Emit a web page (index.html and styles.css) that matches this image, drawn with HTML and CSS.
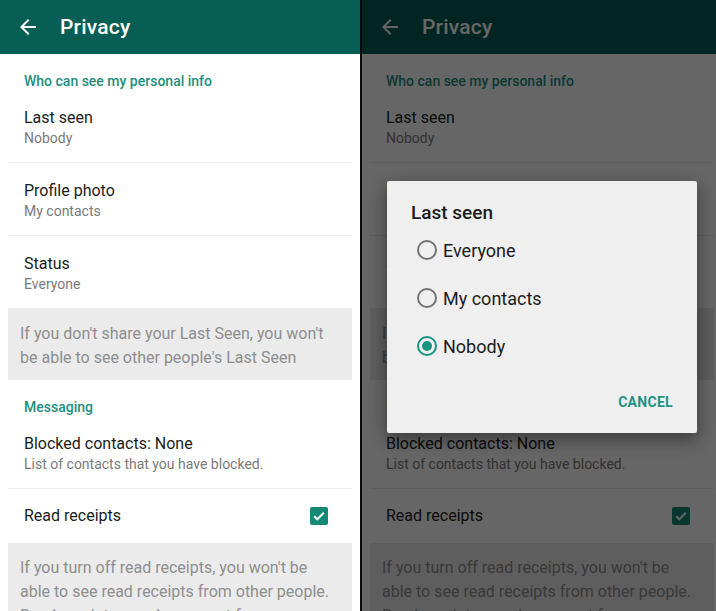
FILE: index.html
```html
<!DOCTYPE html>
<html lang="en">
<head>
    <meta charset="UTF-8">
    <meta name="viewport" content="width=device-width, initial-scale=1.0">
    <title>Privacy</title>
    <link rel="stylesheet" href="styles.css">
</head>
<body>
    <div class="page">
        <!-- Left: settings screen -->
        <div class="shot">
            <div class="screen">
                <header class="appbar">
                    <svg class="back" viewBox="0 0 24 24"><path d="M20 11H7.83l5.59-5.59L12 4l-8 8 8 8 1.41-1.41L7.83 13H20v-2z"/></svg>
                    <h1>Privacy</h1>
                </header>
                <div class="content">
                    <div class="section-title">Who can see my personal info</div>
                    <div class="row">
                        <div class="row-title">Last seen</div>
                        <div class="row-sub">Nobody</div>
                    </div>
                    <div class="row">
                        <div class="row-title">Profile photo</div>
                        <div class="row-sub">My contacts</div>
                    </div>
                    <div class="row">
                        <div class="row-title">Status</div>
                        <div class="row-sub">Everyone</div>
                    </div>
                    <div class="note">If you don't share your Last Seen, you won't be able to see other people's Last Seen</div>
                    <div class="section-title">Messaging</div>
                    <div class="row">
                        <div class="row-title">Blocked contacts: None</div>
                        <div class="row-sub">List of contacts that you have blocked.</div>
                    </div>
                    <div class="row row-check">
                        <div class="row-title">Read receipts</div>
                        <span class="checkbox"><svg viewBox="0 0 18 18"><path d="M4.2 9.2l3.1 3.1 6.5-6.6" /></svg></span>
                    </div>
                    <div class="note">If you turn off read receipts, you won't be able to see read receipts from other people. Read receipts are always sent for group chats.</div>
                </div>
            </div>
        </div>

        <div class="split"></div>

        <!-- Right: same screen with the Last seen dialog open -->
        <div class="shot shot-dialog">
            <div class="screen">
                <header class="appbar">
                    <svg class="back" viewBox="0 0 24 24"><path d="M20 11H7.83l5.59-5.59L12 4l-8 8 8 8 1.41-1.41L7.83 13H20v-2z"/></svg>
                    <h1>Privacy</h1>
                </header>
                <div class="content">
                    <div class="section-title">Who can see my personal info</div>
                    <div class="row">
                        <div class="row-title">Last seen</div>
                        <div class="row-sub">Nobody</div>
                    </div>
                    <div class="row">
                        <div class="row-title">Profile photo</div>
                        <div class="row-sub">My contacts</div>
                    </div>
                    <div class="row">
                        <div class="row-title">Status</div>
                        <div class="row-sub">Everyone</div>
                    </div>
                    <div class="note">If you don't share your Last Seen, you won't be able to see other people's Last Seen</div>
                    <div class="section-title">Messaging</div>
                    <div class="row">
                        <div class="row-title">Blocked contacts: None</div>
                        <div class="row-sub">List of contacts that you have blocked.</div>
                    </div>
                    <div class="row row-check">
                        <div class="row-title">Read receipts</div>
                        <span class="checkbox"><svg viewBox="0 0 18 18"><path d="M4.2 9.2l3.1 3.1 6.5-6.6" /></svg></span>
                    </div>
                    <div class="note">If you turn off read receipts, you won't be able to see read receipts from other people. Read receipts are always sent for group chats.</div>
                </div>
            </div>
            <div class="scrim"></div>
            <div class="dialog">
                <div class="dialog-title">Last seen</div>
                <div class="radio-list">
                    <div class="radio-row"><span class="radio"></span>Everyone</div>
                    <div class="radio-row"><span class="radio"></span>My contacts</div>
                    <div class="radio-row"><span class="radio checked"></span>Nobody</div>
                </div>
                <div class="dialog-actions">
                    <span class="text-btn">CANCEL</span>
                </div>
            </div>
        </div>
    </div>
</body>
</html>
```

FILE: styles.css
```css
body {
    margin: 0;
    padding: 0;
    background-color: #ffffff;
    font-family: Roboto, "Noto Sans", Arial, sans-serif;
    color: #1c1c1c;
    overflow: hidden;
}
.page {
    display: flex;
    width: 716px;
    height: 611px;
    overflow: hidden;
}
.shot {
    width: 360px;
    height: 611px;
    flex-shrink: 0;
    overflow: hidden;
    position: relative;
}
.shot-dialog {
    width: 354px;
}
.split {
    width: 2px;
    flex-shrink: 0;
    background-color: #0a0a0a;
}
.screen {
    width: 360px;
    background-color: #ffffff;
}
.appbar {
    height: 54px;
    background-color: #075e54;
    display: flex;
    align-items: center;
    padding-left: 16px;
    gap: 20px;
}
.back {
    width: 24px;
    height: 24px;
    fill: #ffffff;
}
h1 {
    margin: 0;
    font-size: 21px;
    font-weight: 500;
    color: #ffffff;
    letter-spacing: 0.2px;
}
.content {
    padding: 0 8px;
}
.section-title {
    padding: 18px 16px 0;
    line-height: 18px;
    font-size: 14px;
    font-weight: 500;
    color: #1f8e7e;
}
.row {
    padding: 18px 16px 14px;
    border-bottom: 1px solid #ececec;
}
.row-title {
    font-size: 16px;
    line-height: 20px;
    color: #1c1c1c;
}
.row-sub {
    font-size: 14px;
    line-height: 20px;
    color: #7a7a7a;
}
.row-check {
    display: flex;
    align-items: center;
    justify-content: space-between;
    height: 54px;
    padding: 0 24px 0 16px;
    box-sizing: border-box;
    border-bottom: none;
}
.checkbox {
    width: 18px;
    height: 18px;
    border-radius: 2px;
    background-color: #138a76;
    display: flex;
}
.checkbox svg {
    width: 18px;
    height: 18px;
    fill: none;
    stroke: #ffffff;
    stroke-width: 2;
}
.note {
    background-color: #ebebeb;
    padding: 13px 12px 10px;
    font-size: 16px;
    line-height: 24px;
    color: #8e8e8e;
}
/* Dialog state */
.scrim {
    position: absolute;
    top: 0;
    left: 0;
    width: 100%;
    height: 100%;
    background-color: rgba(0, 0, 0, 0.6);
}
.dialog {
    position: absolute;
    left: 25px;
    top: 181px;
    width: 310px;
    height: 252px;
    box-sizing: border-box;
    background-color: #efefef;
    border-radius: 2px;
    box-shadow: 0 6px 18px rgba(0, 0, 0, 0.45);
    display: flex;
    flex-direction: column;
}
.dialog-title {
    padding: 19px 24px 0;
    line-height: 26px;
    font-size: 19px;
    font-weight: 500;
    color: #1c1c1c;
}
.radio-list {
    display: flex;
    flex-direction: column;
}
.radio-row {
    height: 48px;
    display: flex;
    align-items: center;
    gap: 6px;
    padding-left: 30px;
    font-size: 18px;
    color: #1c1c1c;
}
.radio {
    width: 20px;
    height: 20px;
    box-sizing: border-box;
    border: 2px solid #737373;
    border-radius: 50%;
    display: flex;
    align-items: center;
    justify-content: center;
}
.radio.checked {
    border-color: #179484;
}
.radio.checked::after {
    content: "";
    width: 10px;
    height: 10px;
    border-radius: 50%;
    background-color: #179484;
}
.dialog-actions {
    margin-top: 14px;
    height: 36px;
    display: flex;
    align-items: center;
    justify-content: flex-end;
    padding-right: 24px;
}
.text-btn {
    font-size: 14px;
    font-weight: 700;
    color: #1e9385;
    letter-spacing: 0.3px;
}
```
